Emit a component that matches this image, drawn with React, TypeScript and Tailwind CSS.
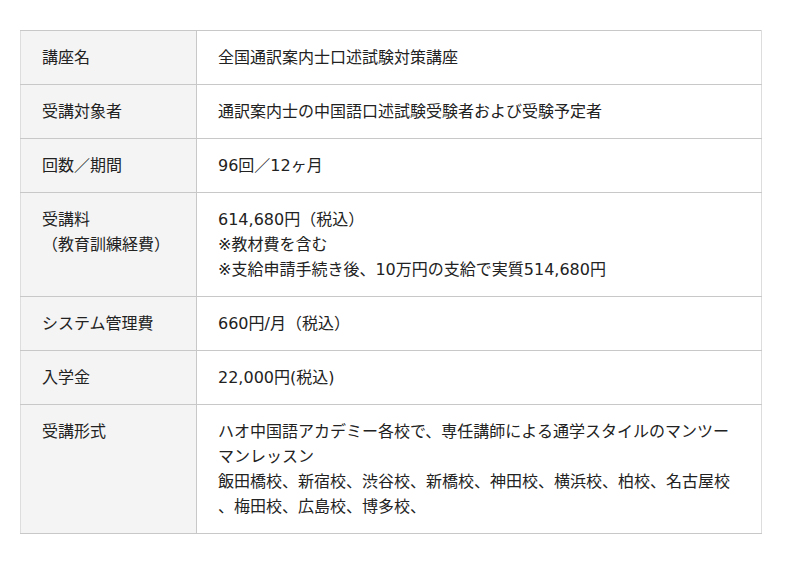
const rows: { label: React.ReactNode; value: React.ReactNode }[] = [
  { label: "講座名", value: "全国通訳案内士口述試験対策講座" },
  { label: "受講対象者", value: "通訳案内士の中国語口述試験受験者および受験予定者" },
  { label: "回数／期間", value: "96回／12ヶ月" },
  {
    label: (
      <>
        受講料
        <br />
        （教育訓練経費）
      </>
    ),
    value: (
      <>
        614,680円（税込）
        <br />
        ※教材費を含む
        <br />
        ※支給申請手続き後、10万円の支給で実質514,680円
      </>
    ),
  },
  { label: "システム管理費", value: "660円/月（税込）" },
  { label: "入学金", value: "22,000円(税込)" },
  {
    label: "受講形式",
    value: (
      <>
        ハオ中国語アカデミー各校で、専任講師による通学スタイルのマンツー
        <br />
        マンレッスン
        <br />
        飯田橋校、新宿校、渋谷校、新橋校、神田校、横浜校、柏校、名古屋校
        <br />
        、梅田校、広島校、博多校、
      </>
    ),
  },
];

export default function App() {
  return (
    <div className="min-h-[564px] bg-white pt-[30px] px-[20px] font-['DejaVu_Sans','Noto_Sans_CJK_JP',sans-serif] text-[16px] text-[#222]">
      <table className="w-[742px] border-collapse border border-[#ddd]">
        <tbody>
          {rows.map((r, i) => (
            <tr key={i}>
              <th className="w-[176px] bg-[#f4f4f4] border border-[#c8c8c8] border-l-[#ddd] px-[21px] py-[14px] text-left align-top font-normal leading-[25px] whitespace-nowrap">
                {r.label}
              </th>
              <td className="border border-[#c8c8c8] border-r-[#ddd] px-[21px] py-[14px] align-top leading-[25px] whitespace-nowrap">
                {r.value}
              </td>
            </tr>
          ))}
        </tbody>
      </table>
    </div>
  );
}
